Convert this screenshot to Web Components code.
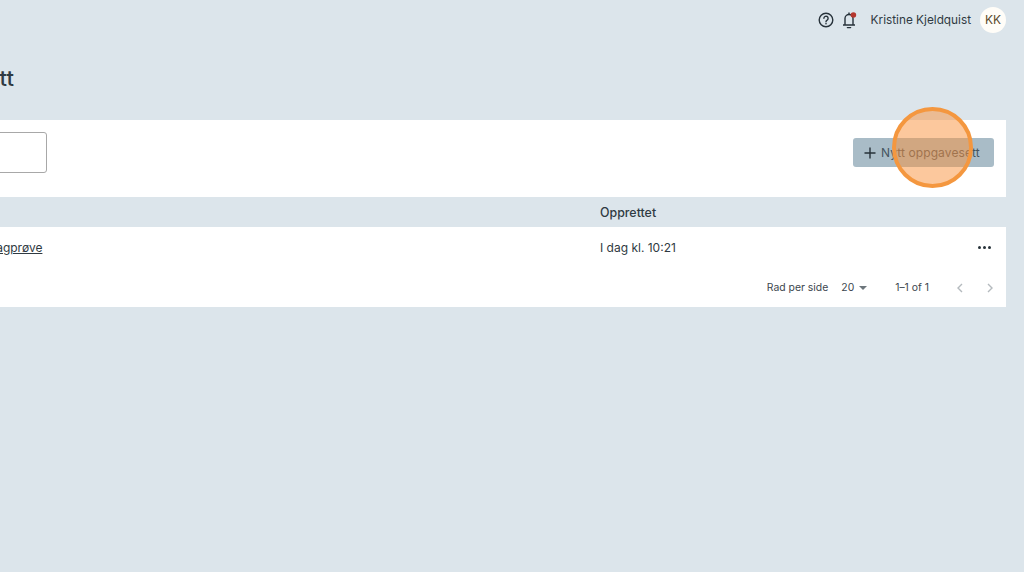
<!DOCTYPE html>
<html lang="no">
<head>
<meta charset="utf-8">
<title>Oppgavesett</title>
<style>
  html, body { margin: 0; height: 100%; overflow: hidden; background: #dce5eb; }
  body { font-family: Inter, "Liberation Sans", sans-serif; color: #2f3a42; }
  #page { display: block; margin-left: -240px; width: 1246px; }
</style>
</head>
<body>
<task-page id="page"></task-page>
<click-marker></click-marker>

<script>
class TopBar extends HTMLElement {
  constructor() {
    super();
    this.attachShadow({ mode: "open" });
    this.shadowRoot.innerHTML = `
      <style>
        :host {
          display: flex;
          align-items: center;
          justify-content: flex-end;
          height: 39px;
          padding-right: 18px;
          font-size: 11.8px;
        }
        svg { display: block; }
        .help { margin-right: 7px; }
        .bell { margin-right: 14px; }
        .name { margin-right: 9px; }
        .avatar {
          width: 26px;
          height: 26px;
          border-radius: 50%;
          background: #fffdf8;
          color: #5b4a2c;
          display: flex;
          align-items: center;
          justify-content: center;
          font-size: 12px;
        }
      </style>
      <svg class="help" width="16" height="16" viewBox="0 0 16 16" fill="none" stroke="#27323a" stroke-width="1.4">
        <circle cx="8" cy="8" r="6.8"/>
        <path d="M5.9 6.3a2.1 2.1 0 1 1 3.2 1.8c-.7.4-1.1.8-1.1 1.6" stroke-linecap="round"/>
        <circle cx="8" cy="11.7" r=".5" fill="#27323a" stroke-width=".6"/>
      </svg>
      <svg class="bell" width="16" height="18" viewBox="0 0 16 18" fill="none" stroke="#27323a" stroke-width="1.4">
        <path d="M2 14h12M4 14V7.5a4 4 0 0 1 8 0V14" stroke-linejoin="round"/>
        <path d="M6.4 16.6h3.2" stroke-linecap="round"/>
        <path d="M8 1.6v2"/>
        <circle cx="12.4" cy="4" r="2.8" fill="#b5372f" stroke="none"/>
      </svg>
      <span class="name"><slot></slot></span>
      <span class="avatar">KK</span>
    `;
  }
}

class TaskToolbar extends HTMLElement {
  constructor() {
    super();
    this.attachShadow({ mode: "open" });
    this.shadowRoot.innerHTML = `
      <style>
        :host {
          display: flex;
          align-items: flex-start;
          justify-content: space-between;
          height: 77px;
          box-sizing: border-box;
          background: #fff;
          padding: 12px 12px 0 0;
        }
        .search {
          margin-left: 60px;
          width: 227px;
          height: 41px;
          box-sizing: border-box;
          border: 1px solid #a8a8a8;
          border-radius: 3px;
        }
        button {
          display: flex;
          align-items: center;
          gap: 5px;
          width: 141px;
          height: 29px;
          margin-top: 6px;
          padding: 0 0 0 11px;
          border: 0;
          border-radius: 3px;
          background: #a9bcc7;
          color: #46555f;
          font: inherit;
          font-size: 12px;
          letter-spacing: .1px;
          white-space: nowrap;
        }
        svg { flex: none; }
      </style>
      <div class="search"></div>
      <button type="button">
        <svg width="12" height="12" viewBox="0 0 12 12" stroke="#27323a" stroke-width="1.4"><path d="M6 .5v11M.5 6h11"/></svg>
        Nytt oppgavesett
      </button>
    `;
  }
}

class TaskTable extends HTMLElement {
  constructor() {
    super();
    this.attachShadow({ mode: "open" });
    this.shadowRoot.innerHTML = `
      <style>
        :host { display: block; font-size: 12px; }
        .row {
          display: grid;
          grid-template-columns: 840px 1fr 58px;
          align-items: center;
        }
        .head { height: 30px; font-weight: 500; }
        .head span { font-size: 12.4px; }
        .body { height: 41px; background: #fff; }
        a { color: inherit; text-decoration: underline; margin-left: 210px; }
        .more { display: flex; gap: 2px; justify-content: flex-end; padding-right: 15px; }
        .more i { width: 3px; height: 3px; border-radius: 50%; background: #27323a; }
        .foot {
          height: 39px;
          background: #fff;
          display: flex;
          align-items: center;
          justify-content: flex-end;
          padding-right: 11px;
          font-size: 10.4px;
          color: #3c464e;
        }
        .per { margin-right: 13px; }
        .size { margin-right: 5px; }
        .caret {
          width: 0; height: 0;
          border: 4px solid transparent;
          border-top: 4px solid #6d767c;
          border-bottom: 0;
          margin-right: 28px;
        }
        .count { margin-right: 26px; }
        .nav { display: block; }
        .nav + .nav { margin-left: 20px; }
      </style>
      <div class="row head"><span></span><span>Opprettet</span><span></span></div>
      <div class="row body">
        <span><a href="#">Heldagprøve</a></span>
        <span>I dag kl. 10:21</span>
        <span class="more"><i></i><i></i><i></i></span>
      </div>
      <div class="foot">
        <span class="per">Rad per side</span>
        <span class="size">20</span>
        <span class="caret"></span>
        <span class="count">1–1 of 1</span>
        <svg class="nav" width="10" height="12" viewBox="0 0 10 12" fill="none" stroke="#b4babe" stroke-width="1.4"><path d="M7 2 3 6l4 4"/></svg>
        <svg class="nav" width="10" height="12" viewBox="0 0 10 12" fill="none" stroke="#b4babe" stroke-width="1.4"><path d="m3 2 4 4-4 4"/></svg>
      </div>
    `;
  }
}

class TaskPage extends HTMLElement {
  constructor() {
    super();
    this.attachShadow({ mode: "open" });
    this.shadowRoot.innerHTML = `
      <style>
        :host { display: block; }
        h1 {
          margin: 0;
          height: 81px;
          box-sizing: border-box;
          padding-top: 26px;
          width: 254px;
          text-align: right;
          font-size: 22px;
          line-height: 26px;
          font-weight: 500;
        }
      </style>
      <top-bar style="margin-right:-18px">Kristine Kjeldquist</top-bar>
      <h1>Oppgavesett</h1>
      <task-toolbar></task-toolbar>
      <task-table></task-table>
    `;
  }
}

class ClickMarker extends HTMLElement {
  constructor() {
    super();
    this.attachShadow({ mode: "open" });
    this.shadowRoot.innerHTML = `
      <style>
        :host {
          position: absolute;
          left: 892px;
          top: 107px;
          width: 81px;
          height: 81px;
          box-sizing: border-box;
          border: 4px solid #f4973f;
          border-radius: 50%;
          background: rgba(250, 145, 60, .5);
        }
      </style>
    `;
  }
}

customElements.define("top-bar", TopBar);
customElements.define("task-toolbar", TaskToolbar);
customElements.define("task-table", TaskTable);
customElements.define("task-page", TaskPage);
customElements.define("click-marker", ClickMarker);
</script>
</body>
</html>
